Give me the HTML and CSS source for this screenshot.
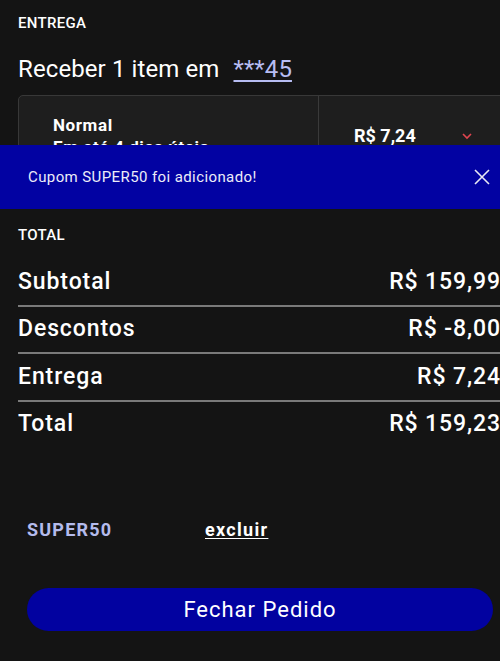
FILE: index.html
```html
<!DOCTYPE html>
<html lang="pt-BR">
<head>
    <meta charset="UTF-8">
    <meta name="viewport" content="width=device-width, initial-scale=1.0">
    <title>Carrinho</title>
    <link rel="stylesheet" href="styles.css">
</head>
<body>
    <div class="page">
        <section class="delivery">
            <h2 class="section-title">ENTREGA</h2>
            <p class="receive">Receber 1 item em <a href="#" class="zip">***45</a></p>
            <div class="ship-card">
                <div class="ship-info">
                    <div class="ship-name">Normal</div>
                    <div class="ship-time">Em até 4 dias úteis</div>
                </div>
                <div class="ship-price">
                    <span>R$ 7,24</span>
                    <svg class="chevron" width="12" height="8" viewBox="0 0 12 8"><path d="M2 2l4 4 4-4" fill="none" stroke="#e0454f" stroke-width="1.6"/></svg>
                </div>
            </div>
        </section>

        <section class="totals">
            <h2 class="section-title">TOTAL</h2>
            <div class="row"><span>Subtotal</span><span>R$ 159,99</span></div>
            <div class="row"><span>Descontos</span><span>R$ -8,00</span></div>
            <div class="row"><span>Entrega</span><span>R$ 7,24</span></div>
            <div class="row last"><span>Total</span><span>R$ 159,23</span></div>
        </section>

        <div class="coupon">
            <span class="coupon-code">SUPER50</span>
            <a href="#" class="coupon-remove">excluir</a>
        </div>

        <button class="checkout">Fechar Pedido</button>
    </div>

    <div class="toast">
        <span>Cupom SUPER50 foi adicionado!</span>
        <svg class="toast-close" width="18" height="18" viewBox="0 0 18 18"><path d="M2 2l14 14M16 2L2 16" stroke="#e8e8f4" stroke-width="1.6"/></svg>
    </div>
</body>
</html>
```

FILE: styles.css
```css
body {
    font-family: Roboto, "Noto Sans", sans-serif;
    color: #ffffff;
    background-color: #141414;
    margin: 0;
    overflow: hidden;
}
.page {
    width: 482px;
    padding-left: 18px;
    padding-top: 14px;
}
.section-title {
    font-size: 15px;
    font-weight: 500;
    letter-spacing: 0.3px;
    margin: 0;
    line-height: 18px;
}
.receive {
    font-size: 24px;
    margin: 23px 0 0 0;
    line-height: 28px;
    letter-spacing: 0.1px;
}
.zip {
    color: #b7bdf2;
    margin-left: 8px;
    text-decoration: underline;
    text-underline-offset: 3px;
}
.ship-card {
    display: flex;
    margin-top: 12px;
    width: 500px;
    height: 110px;
    background-color: #1e1e1e;
    border: 1px solid #383838;
    border-radius: 5px;
}
.ship-info {
    width: 265px;
    padding: 19px 0 0 34px;
    border-right: 1px solid #3a3a3a;
}
.ship-name {
    font-size: 17px;
    font-weight: 700;
    letter-spacing: 0.6px;
}
.ship-time {
    font-size: 17px;
    font-weight: 700;
    letter-spacing: 0.6px;
    margin-top: 2px;
}
.ship-price {
    display: flex;
    align-items: flex-start;
    padding: 29px 0 0 35px;
    font-size: 18px;
    font-weight: 700;
    letter-spacing: 0;
}
.chevron {
    margin: 7px 0 0 45px;
}
.totals {
    margin-top: 19px;
}
.totals .section-title {
    margin-bottom: 15px;
}
.row {
    display: flex;
    justify-content: space-between;
    align-items: center;
    width: 482px;
    height: 44.5px;
    padding-bottom: 1px;
    border-bottom: 2px solid #7a7a7a;
    font-size: 23px;
    font-weight: 500;
    letter-spacing: 0.9px;
}
.row span:last-child {
    margin-right: -1px;
}
.row.last {
    border-bottom: none;
}
.coupon {
    display: flex;
    align-items: center;
    margin: 72px 0 0 9px;
    font-size: 18px;
    font-weight: 700;
    letter-spacing: 1.2px;
}
.coupon-code {
    color: #b4bbec;
    width: 178px;
}
.coupon-remove {
    color: #ffffff;
    letter-spacing: 1.3px;
    text-underline-offset: 2px;
}
.checkout {
    display: block;
    margin: 48px 0 0 9px;
    width: 466px;
    height: 43px;
    border: none;
    border-radius: 22px;
    background-color: #0202a0;
    color: #ffffff;
    font-family: Roboto, "Noto Sans", sans-serif;
    font-size: 22px;
    letter-spacing: 1px;
    cursor: pointer;
}
.toast {
    position: absolute;
    top: 145px;
    left: 0;
    width: 500px;
    height: 64px;
    box-sizing: border-box;
    padding: 0 9px 0 28px;
    display: flex;
    align-items: center;
    justify-content: space-between;
    background-color: #0202a2;
    color: #ececf8;
    font-size: 15px;
    letter-spacing: 0.4px;
}
```
